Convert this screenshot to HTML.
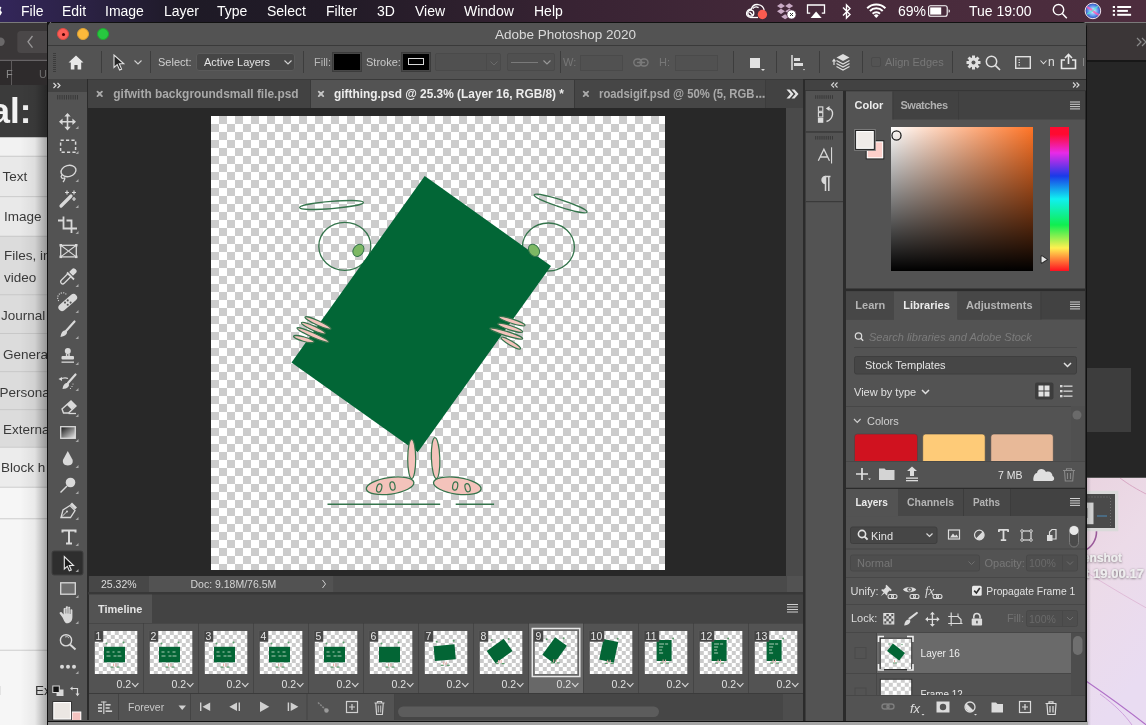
<!DOCTYPE html>
<html><head><meta charset="utf-8">
<style>
*{box-sizing:border-box;margin:0;padding:0}
html,body{width:1146px;height:725px;overflow:hidden;background:#e9dbe6;font-family:"Liberation Sans",sans-serif}
.a{position:absolute}
#ps,#menubar,#lb{will-change:transform}
#menubar{left:0;top:0;width:1146px;height:22px;background:linear-gradient(90deg,#33265a 0%,#2a2142 8%,#1e1a26 16%,#221b27 30%,#382333 50%,#472a3b 72%,#4d2d3e 100%);color:#fff;font-size:14px}
#menubar span{position:absolute;top:3px;white-space:nowrap}
#ps{left:48px;top:22px;width:1039px;height:700px;background:#535353;border-radius:5px 5px 0 0;overflow:hidden}
.t{color:#d6d6d6;font-size:11px;white-space:nowrap;position:absolute}
</style></head>
<body>
<!-- desktop wallpaper right -->
<svg class="a" style="left:1080px;top:470px" width="66" height="255" viewBox="1080 470 66 255" font-family="Liberation Sans">
<defs><linearGradient id="wp" x1="0" y1="0" x2="0.3" y2="1"><stop offset="0" stop-color="#e9d3df"/><stop offset="0.45" stop-color="#ecdbe8"/><stop offset="1" stop-color="#e9dcf2"/></linearGradient>
<linearGradient id="wsh" x1="0" y1="0" x2="1" y2="0"><stop offset="0" stop-color="#000" stop-opacity="0.2"/><stop offset="1" stop-color="#000" stop-opacity="0"/></linearGradient>
<filter id="tsh" x="-20%" y="-50%" width="140%" height="200%"><feDropShadow dx="0" dy="0.6" stdDeviation="0.9" flood-color="#000" flood-opacity="0.55"/></filter></defs>
<rect x="1080" y="470" width="66" height="255" fill="url(#wp)"/>
<path d="M1120 478C1128 484 1136 489 1150 496" fill="none" stroke="#d8a8c4" stroke-width="1"/>
<path d="M1096.5 531A21 21 0 0 1 1084 551" fill="none" stroke="#9a5a9a" stroke-width="1.6"/>
<path d="M1086 572C1105 584 1125 596 1150 610" fill="none" stroke="#e0bcd8" stroke-width="1"/>
<path d="M1086 681C1105 694 1125 708 1150 728" fill="none" stroke="#b070c8" stroke-width="1.1"/>
<path d="M1100 694C1115 705 1125 715 1132 725" fill="none" stroke="#c890d8" stroke-width="0.8"/>
<rect x="1080" y="490.8" width="38.3" height="40.5" fill="#dadada"/>
<rect x="1080" y="494" width="35" height="34" fill="#4a4a4a"/>
<rect x="1080" y="502.6" width="13.5" height="21.6" fill="#d0d0d0"/>
<rect x="1086" y="508" width="1.3" height="10" fill="#222"/>
<path d="M1097 516H1107" stroke="#4a8ab8" stroke-width="1"/>
<path d="M1110.5 498V526" stroke="#777" stroke-width="0.8" stroke-dasharray="1 2"/>
<path d="M1088 497H1110" stroke="#666" stroke-width="0.8" stroke-dasharray="2 1"/>
<g font-size="12.5" font-weight="bold" fill="#eeeeee" filter="url(#tsh)">
<text x="1083" y="562" textLength="39" lengthAdjust="spacingAndGlyphs">enshot</text>
<text x="1085" y="578" textLength="59" lengthAdjust="spacingAndGlyphs">t 19.00.17</text>
</g>
<rect x="1086" y="478" width="5" height="247" fill="url(#wsh)"/>
</svg>
<!-- right dark window -->
<div class="a" style="left:1080px;top:22px;width:66px;height:456px;background:#262626;border-bottom:1px solid #555"></div>
<div class="a" style="left:1080px;top:22px;width:66px;height:40px;background:linear-gradient(90deg,#2e2a2b,#3b3637 15%,#3b3637);border-top:1.5px solid #7a7a7a;border-bottom:2px solid #171717"></div>
<svg class="a" style="left:1136px;top:37px" width="12" height="10" viewBox="0 0 12 10"><path d="M1 1L5 5L1 9M6 1L10 5L6 9" fill="none" stroke="#8a8a8a" stroke-width="1.2"/></svg>
<div class="a" style="left:1080px;top:368px;width:51px;height:64px;background:#3d3d3d"></div>
<!-- left browser window -->
<div class="a" id="lb" style="left:0;top:22px;width:50px;height:703px;background:#f2f2f2;overflow:hidden">
<svg class="a" style="left:0;top:0" width="50" height="703" viewBox="0 22 50 703" font-family="Liberation Sans">
<rect x="0" y="22" width="50" height="703" fill="#f4f4f4"/>
<rect x="0" y="22" width="50" height="38" fill="#3a3738"/>
<rect x="0" y="22" width="50" height="1" fill="#7a7a7a"/>
<circle cx="0.5" cy="41.7" r="4.2" fill="#6a6869"/>
<rect x="17.3" y="30.9" width="40" height="22" rx="3.5" fill="#4a4748"/>
<path d="M32.5 36L28 41.8L32.5 47.6" fill="none" stroke="#9a9899" stroke-width="1.3"/>
<rect x="0" y="59.5" width="50" height="1" fill="#4e4b4c"/>
<rect x="0" y="60.5" width="50" height="24.5" fill="#2e2b2c"/>
<rect x="11" y="60.5" width="1" height="24.5" fill="#5e5b5c"/>
<text x="6" y="78" font-size="11" fill="#8a8a8a">F</text>
<text x="39" y="78" font-size="11" fill="#6e6e6e">U</text>
<rect x="0" y="85" width="50" height="52.5" fill="#3b3b3b"/>
<text x="-9.5" y="122.8" font-size="35" font-weight="bold" fill="#f2f2f2">al:</text>
<rect x="0" y="137.5" width="50" height="18.5" fill="#f2f2f2"/>
<rect x="0" y="156" width="50" height="40.5" fill="#e9e9e9"/>
<rect x="0" y="196.5" width="50" height="39.5" fill="#e9e9e9"/>
<rect x="0" y="236" width="50" height="211" fill="#dcdcdc"/>
<rect x="0" y="447" width="50" height="40" fill="#ececec"/>
<rect x="0" y="487" width="50" height="238" fill="#f6f6f6"/>
<g fill="#c4c4c4"><rect x="0" y="155.8" width="50" height="0.8"/><rect x="0" y="196.3" width="50" height="0.8"/><rect x="0" y="235.8" width="50" height="0.8"/><rect x="0" y="294.4" width="50" height="0.8"/><rect x="0" y="333.2" width="50" height="0.8"/><rect x="0" y="371.3" width="50" height="0.8"/><rect x="0" y="409.3" width="50" height="0.8"/><rect x="0" y="446.8" width="50" height="0.8"/><rect x="0" y="486.8" width="50" height="0.8"/><rect x="0" y="518.4" width="50" height="0.8"/><rect x="0" y="649.8" width="50" height="0.8"/></g>
<g font-size="13.5" fill="#3a3a3a">
<text x="2.5" y="180.5">Text</text>
<text x="4" y="220.7">Image</text>
<text x="4" y="260">Files, in</text>
<text x="4" y="281.5">video</text>
<text x="1" y="320">Journal</text>
<text x="3" y="358.5">General</text>
<text x="-0.5" y="396.5">Personal</text>
<text x="3" y="434">External</text>
<text x="1" y="471.5">Block h</text>
<text x="-2" y="695">l</text>
<text x="35" y="695">Ex</text>
</g>
<defs><linearGradient id="lsh" x1="0" y1="0" x2="1" y2="0"><stop offset="0" stop-color="#000" stop-opacity="0"/><stop offset="0.55" stop-color="#000" stop-opacity="0.05"/><stop offset="1" stop-color="#000" stop-opacity="0.32"/></linearGradient></defs>
<rect x="20" y="85" width="27" height="640" fill="url(#lsh)"/>
<rect x="47" y="22" width="3" height="703" fill="#111"/>
</svg>
</div>
<!-- menubar -->
<div class="a" id="menubar">

<svg class="a" style="left:-9px;top:4px" width="12" height="14" viewBox="0 0 12 14"><path d="M6 3.5C7 2 9.5 2.2 10.5 3.8C9 4.8 9.2 7.3 11 8C10.4 9.8 9.2 12 8 12C7 12 6.8 11.4 5.8 11.4C4.8 11.4 4.4 12 3.5 12C2 12 0 9 0 6.5C0 3.5 2.5 2.5 3.8 3C4.8 3.3 5.2 3.5 6 3.5Z" fill="#fff"/></svg>
<span style="left:21px">File</span>
<span style="left:62px">Edit</span>
<span style="left:105px">Image</span>
<span style="left:164px">Layer</span>
<span style="left:217px">Type</span>
<span style="left:267px">Select</span>
<span style="left:326px">Filter</span>
<span style="left:377px">3D</span>
<span style="left:415px">View</span>
<span style="left:464px">Window</span>
<span style="left:534px">Help</span>
<!-- CC icon -->
<svg class="a" style="left:744px;top:1px" width="26" height="20" viewBox="744 1 26 20"><g fill="none" stroke="#fff" stroke-width="1.3"><path d="M751 17.5C747.5 17.5 746.3 15 746.6 12.8C747 10.2 749.2 9 751.2 9.3C752.2 6 755 4.2 758.2 4.6C761.5 5 763.8 7.6 764.2 10.5"/><path d="M751 17.5H758"/><circle cx="750.8" cy="13.2" r="3"/><path d="M752.8 8.6C754.2 7 756.6 6.5 758.6 7.6"/></g><path d="M749.5 12L752.8 15.2" stroke="#fff" stroke-width="1.3"/><circle cx="762.4" cy="14.5" r="4.7" fill="#fb5b50"/></svg>
<!-- dropbox -->
<svg class="a" style="left:776px;top:2px" width="22" height="18" viewBox="776 2 22 18"><g fill="#c9aac5"><path d="M781 3.3L785 5.9L781 8.5L777 5.9Z M789.2 3.3L793.2 5.9L789.2 8.5L785.2 5.9Z M781 8.7L785 11.3L781 13.9L777 11.3Z M789.2 8.7L793.2 11.3L789.2 13.9L785.2 11.3Z M785.1 14.2L789 16.7L785.1 19.2L781.2 16.7Z"/></g><circle cx="791.5" cy="14.5" r="4.6" fill="#fff" stroke="#4a2a40" stroke-width="0.8"/><path d="M790 13L793 16M793 13L790 16" stroke="#333" stroke-width="1"/></svg>
<!-- airplay -->
<svg class="a" style="left:805px;top:3px" width="22" height="17" viewBox="805 3 22 17"><path d="M810.2 13.2H807.5V5H824.5V13.2H821.8" fill="none" stroke="#fff" stroke-width="1.3"/><path d="M810.6 18L816.1 11.4L821.6 18Z" fill="#fff"/></svg>
<!-- bluetooth -->
<svg class="a" style="left:841px;top:3px" width="12" height="17" viewBox="0 0 12 17"><path d="M2 4.5L9 11.5L5.5 15V2L9 5.5L2 12.5" fill="none" stroke="#fff" stroke-width="1.4"/></svg>
<!-- wifi -->
<svg class="a" style="left:864px;top:2px" width="25" height="18" viewBox="864 2 25 18"><g fill="none" stroke="#fff" stroke-width="2"><path d="M867.2 8.2A13 13 0 0 1 885.4 8.2"/><path d="M869.9 11A9 9 0 0 1 882.7 11"/><path d="M872.6 13.8A5.2 5.2 0 0 1 880 13.8"/></g><path d="M876.3 18L873.9 15.5A3.4 3.4 0 0 1 878.7 15.5Z" fill="#fff"/></svg>
<span style="left:898px;font-size:14px">69%</span>
<!-- battery -->
<svg class="a" style="left:926px;top:3px" width="28" height="16" viewBox="926 3 28 16"><rect x="928.6" y="5.8" width="18.6" height="10.4" rx="2" fill="none" stroke="#fff" stroke-width="1.1"/><rect x="930.2" y="7.4" width="11" height="7.2" fill="#fff"/><path d="M948.6 9.2A1.9 1.9 0 0 1 948.6 12.8Z" fill="#fff"/></svg>
<span style="left:969px">Tue 19:00</span>
<!-- search -->
<svg class="a" style="left:1050px;top:2px" width="20" height="19" viewBox="1050 2 20 19"><circle cx="1058.5" cy="9.7" r="5.2" fill="none" stroke="#fff" stroke-width="1.4"/><path d="M1062.3 13.5L1066.8 18.3" stroke="#fff" stroke-width="1.5"/></svg>
<!-- siri -->
<svg class="a" style="left:1084px;top:2px" width="18" height="18" viewBox="1084 2 18 18"><defs><radialGradient id="sg" cx="50%" cy="50%" r="55%"><stop offset="0" stop-color="#ffffff"/><stop offset="0.3" stop-color="#9ad0ff"/><stop offset="0.7" stop-color="#4a7ae0"/><stop offset="1" stop-color="#2a2a80"/></radialGradient></defs><circle cx="1092.9" cy="10.9" r="7.8" fill="url(#sg)"/><path d="M1087 7Q1091 9 1093 11T1099 15" stroke="#ff5ab0" stroke-width="2" fill="none" opacity="0.8"/><path d="M1087 14Q1092 12 1098 6" stroke="#50f0d0" stroke-width="1.5" fill="none" opacity="0.7"/><circle cx="1092.9" cy="10.9" r="7.8" fill="none" stroke="#f4e8f0" stroke-width="1"/></svg>
<!-- list -->
<svg class="a" style="left:1110px;top:4px" width="24" height="14" viewBox="1110 4 24 14"><g fill="#fff"><rect x="1112.8" y="6" width="2.2" height="2"/><rect x="1117.2" y="6" width="13.9" height="2"/><rect x="1112.8" y="9.9" width="2.2" height="2"/><rect x="1117.2" y="9.9" width="10.7" height="2"/><rect x="1112.8" y="13.8" width="2.2" height="2"/><rect x="1117.2" y="13.8" width="13.9" height="2"/></g></svg>
</div>
<div class="a" style="left:48px;top:721px;width:1040px;height:4px;background:linear-gradient(90deg,#8a8a8a,#a4a4a4 50%,#a8a8a8)"></div>
<!-- photoshop window -->
<div class="a" id="ps">

<!-- title bar -->
<div class="a" style="left:0;top:0;width:1038px;height:24px;background:#535353;border-top:1px solid #111;border-bottom:1px solid #3a3a3a"></div>
<div class="a" style="left:9px;top:6px;width:12px;height:12px;border-radius:50%;background:#fd5e57;border:0.5px solid #de4a43"></div>
<div class="a" style="left:13.5px;top:10.5px;width:3px;height:3px;border-radius:50%;background:#4d0000"></div>
<div class="a" style="left:29px;top:6px;width:12px;height:12px;border-radius:50%;background:#fcb93b;border:0.5px solid #dea236"></div>
<div class="a" style="left:49px;top:6px;width:12px;height:12px;border-radius:50%;background:#27c83f;border:0.5px solid #1fa631"></div>
<div class="t" style="left:447px;top:5px;font-size:13.5px;color:#dadada">Adobe Photoshop 2020</div>
<!-- options bar -->
<div class="a" style="left:0;top:24px;width:1038px;height:34px;background:#535353;border-bottom:1px solid #3a3a3a"></div>
<div class="a" id="opts" style="left:0;top:23px;width:1038px;height:34px">
<div class="a" style="left:5px;top:8px;width:3px;height:19px;background:repeating-linear-gradient(#3c3c3c 0 1px,transparent 1px 2px)"></div>
<svg class="a" style="left:20px;top:10px" width="16" height="15" viewBox="0 0 16 15"><path d="M8 0.5L15.5 7.5H13.2V14.5H9.6V10H6.4V14.5H2.8V7.5H0.5Z" fill="#e8e8e8"/></svg>
<div class="a" style="left:53px;top:6px;width:1px;height:22px;background:#3d3d3d"></div>
<svg class="a" style="left:65px;top:9px" width="13" height="17" viewBox="0 0 13 17"><path d="M1 1V13.5L4.2 10.6L6.6 16L8.6 15.1L6.3 9.8H10.8Z" fill="#232323" stroke="#e0e0e0" stroke-width="1.1"/></svg>
<svg class="a" style="left:86px;top:15px" width="8" height="5" viewBox="0 0 8 5"><path d="M0.5 0.5L4 4L7.5 0.5" fill="none" stroke="#cfcfcf" stroke-width="1.1"/></svg>
<div class="a" style="left:102px;top:6px;width:1px;height:22px;background:#3d3d3d"></div>
<div class="t" style="left:110px;top:11px;color:#d0d0d0">Select:</div>
<div class="a" style="left:148px;top:8px;width:99px;height:18px;background:#464646;border:1px solid #5a5a5a;border-radius:3px"></div>
<div class="t" style="left:156px;top:11px;color:#e4e4e4">Active Layers</div>
<svg class="a" style="left:236px;top:15px" width="8" height="5" viewBox="0 0 8 5"><path d="M0.5 0.5L4 4L7.5 0.5" fill="none" stroke="#d0d0d0" stroke-width="1.1"/></svg>
<div class="a" style="left:255px;top:6px;width:1px;height:22px;background:#3d3d3d"></div>
<div class="t" style="left:266px;top:11px;color:#b8b8b8">Fill:</div>
<div class="a" style="left:284px;top:7px;width:30px;height:20px;background:#474747;border:1px solid #3c3c3c"></div>
<div class="a" style="left:286px;top:9px;width:26px;height:16px;background:#000"></div>
<div class="t" style="left:318px;top:11px;color:#c8c8c8">Stroke:</div>
<div class="a" style="left:353px;top:7px;width:30px;height:20px;background:#474747;border:1px solid #3c3c3c"></div>
<div class="a" style="left:355px;top:9px;width:26px;height:16px;background:#000"></div>
<div class="a" style="left:360px;top:13px;width:16px;height:7px;border:1.5px solid #d8d8d8"></div>
<div class="a" style="left:387px;top:8px;width:66px;height:18px;border:1px solid #4a4a4a;border-radius:2px;background:#505050"></div>
<div class="a" style="left:438px;top:8px;width:1px;height:18px;background:#4a4a4a"></div>
<svg class="a" style="left:442px;top:16px" width="8" height="5" viewBox="0 0 8 5"><path d="M0.5 0.5L4 4L7.5 0.5" fill="none" stroke="#6a6a6a" stroke-width="1"/></svg>
<div class="a" style="left:459px;top:8px;width:48px;height:18px;border:1px solid #4a4a4a;border-radius:2px;background:#505050"></div>
<div class="a" style="left:463px;top:16.5px;width:27px;height:1px;background:#7a7a7a"></div>
<svg class="a" style="left:495px;top:15px" width="8" height="5" viewBox="0 0 8 5"><path d="M0.5 0.5L4 4L7.5 0.5" fill="none" stroke="#9a9a9a" stroke-width="1.1"/></svg>
<div class="a" style="left:512px;top:6px;width:1px;height:22px;background:#3d3d3d"></div>
<div class="t" style="left:515px;top:11px;color:#777">W:</div>
<div class="a" style="left:532px;top:10px;width:43px;height:16px;border:1px solid #4a4a4a;background:#515151"></div>
<svg class="a" style="left:585px;top:13px" width="16" height="9" viewBox="0 0 16 9"><rect x="0.8" y="1" width="8" height="7" rx="3.5" fill="none" stroke="#7a7a7a" stroke-width="1.4"/><rect x="7" y="1" width="8" height="7" rx="3.5" fill="none" stroke="#7a7a7a" stroke-width="1.4"/><path d="M4 4.5H12" stroke="#7a7a7a" stroke-width="1.4"/></svg>
<div class="t" style="left:611px;top:11px;color:#777">H:</div>
<div class="a" style="left:627px;top:10px;width:43px;height:16px;border:1px solid #4a4a4a;background:#515151"></div>
<div class="a" style="left:685px;top:6px;width:1px;height:22px;background:#3d3d3d"></div>
<div class="a" style="left:702px;top:13px;width:10px;height:10px;background:#e2e2e2"></div>
<div class="a" style="left:713px;top:24px;width:0;height:0;border-left:2px solid transparent;border-right:2px solid transparent;border-top:2px solid #ddd"></div>
<div class="a" style="left:728px;top:6px;width:1px;height:22px;background:#3d3d3d"></div>
<svg class="a" style="left:743px;top:10px" width="16" height="16" viewBox="0 0 16 16"><path d="M1 0V15" stroke="#ddd" stroke-width="1.5"/><rect x="3" y="3" width="6" height="3" fill="#ddd"/><rect x="3" y="8" width="9" height="3" fill="#ddd"/><path d="M12 14L14 14L13 15.5Z" fill="#ddd"/></svg>
<div class="a" style="left:771px;top:6px;width:1px;height:22px;background:#3d3d3d"></div>
<svg class="a" style="left:784px;top:8px" width="19" height="19" viewBox="0 0 19 19"><path d="M2 12V7M0.5 8.5L2 6.5L3.5 8.5" fill="none" stroke="#ddd" stroke-width="1.2"/><path d="M11 1L17.5 4.5L11 8L4.5 4.5Z" fill="#ddd"/><path d="M4.5 7.5L11 11L17.5 7.5M4.5 10.5L11 14L17.5 10.5M4.5 13.5L11 17L17.5 13.5" fill="none" stroke="#ddd" stroke-width="1.2"/></svg>
<div class="a" style="left:814px;top:6px;width:1px;height:22px;background:#3d3d3d"></div>
<div class="a" style="left:823px;top:12px;width:10px;height:10px;border:1px solid #4a4a4a;border-radius:2px"></div>
<div class="t" style="left:837px;top:11px;color:#777">Align Edges</div>
<div class="a" style="left:904px;top:6px;width:1px;height:22px;background:#3d3d3d"></div>
<svg class="a" style="left:918px;top:10px" width="15" height="15" viewBox="0 0 15 15"><g transform="translate(7.5 7.5)"><circle r="5" fill="#e0e0e0"/><g fill="#e0e0e0"><rect x="-1.5" y="-7" width="3" height="14"/><rect x="-7" y="-1.5" width="14" height="3"/><rect x="-1.5" y="-7" width="3" height="14" transform="rotate(45)"/><rect x="-1.5" y="-7" width="3" height="14" transform="rotate(-45)"/></g><circle r="2" fill="#535353"/></g></svg>
<svg class="a" style="left:937px;top:10px" width="16" height="16" viewBox="0 0 16 16"><circle cx="6.5" cy="6.5" r="5.2" fill="none" stroke="#e0e0e0" stroke-width="1.5"/><path d="M10.3 10.3L15 15" stroke="#e0e0e0" stroke-width="1.7"/></svg>
<svg class="a" style="left:967px;top:11px" width="16" height="13" viewBox="0 0 16 13"><rect x="0.7" y="0.7" width="14.6" height="11.6" fill="none" stroke="#e0e0e0" stroke-width="1.4"/><path d="M3.5 4H5M3.5 6.5H5M3.5 9H5" stroke="#e0e0e0" stroke-width="1.2"/></svg>
<svg class="a" style="left:992px;top:15px" width="7" height="5" viewBox="0 0 7 5"><path d="M0.5 0.5L3.5 3.8L6.5 0.5" fill="none" stroke="#ddd" stroke-width="1.1"/></svg>
<div class="t" style="left:1000px;top:10px;color:#e0e0e0;font-size:12px">n</div>
<svg class="a" style="left:1012px;top:8px" width="17" height="17" viewBox="0 0 17 17"><path d="M5 7H1.5V15.5H15.5V7H12" fill="none" stroke="#e8e8e8" stroke-width="1.6"/><path d="M8.5 11V1.5M5 5L8.5 1.5L12 5" fill="none" stroke="#e8e8e8" stroke-width="1.6"/></svg>
<div class="a" style="left:1035px;top:13px;width:1px;height:8px;background:#888"></div>
</div>
<!-- header row under options -->
<div class="a" style="left:0;top:57px;width:39px;height:13px;background:#424242"></div>
<div class="a" style="left:757px;top:57px;width:281px;height:12px;background:#424242"></div>
<!-- toolbar -->
<div class="a" id="tools" style="left:0;top:70px;width:39px;height:628px;background:#535353"></div>
<svg class="a" style="left:0;top:57px" width="40" height="641" viewBox="48 79 40 641">
<rect x="48" y="79" width="39" height="13" fill="#424242"/>
<path d="M53.5 83L56 85.5L53.5 88M57.5 83L60 85.5L57.5 88" fill="none" stroke="#d8d8d8" stroke-width="1.2"/>
<g stroke="#393939" stroke-width="1"><path d="M57.7 95V99.5"/><path d="M59.9 95V99.5"/><path d="M62.1 95V99.5"/><path d="M64.3 95V99.5"/><path d="M66.5 95V99.5"/><path d="M68.7 95V99.5"/><path d="M70.9 95V99.5"/><path d="M73.1 95V99.5"/><path d="M75.3 95V99.5"/><path d="M77.5 95V99.5"/></g>
<g stroke="#d9d9d9" stroke-width="1.6" fill="none"><path d="M67.5 114.5V129M60 121.7H75"/></g><g fill="#d9d9d9"><path d="M67.5 113L64.3 116.6H70.7Z M67.5 130.4L64.3 126.8H70.7Z M59 121.7L62.6 118.5V124.9Z M76 121.7L72.4 118.5V124.9Z"/></g><path d="M78.5 129.0L78.5 126.0L75.5 129.0Z" fill="#a8a8a8"/>
<rect x="60.6" y="140.3" width="15" height="12" fill="none" stroke="#d9d9d9" stroke-width="1.5" stroke-dasharray="3.2 2.2"/><path d="M78.5 154.0L78.5 151.0L75.5 154.0Z" fill="#a8a8a8"/>
<ellipse cx="68.5" cy="171" rx="7.6" ry="5.5" fill="none" stroke="#d9d9d9" stroke-width="1.4" transform="rotate(-15 68.5 171)"/><path d="M62 175C60 177 62 179 64 178C66 177 64 181 63 182" fill="none" stroke="#d9d9d9" stroke-width="1.3"/><path d="M78.5 182.0L78.5 179.0L75.5 182.0Z" fill="#a8a8a8"/>
<path d="M61 206L71 196" stroke="#d9d9d9" stroke-width="3.2" stroke-linecap="round"/><g stroke="#d9d9d9" stroke-width="1.2"><path d="M67 190.5V194.5M65 192.5H69M74 190.5V194.5M72 192.5H76M74 197V201M72 199H76"/></g><path d="M78.5 208.0L78.5 205.0L75.5 208.0Z" fill="#a8a8a8"/>
<path d="M58 220.5H63.5M63.5 216.5V228.5H75.5M66.5 220.5H71.5V231M71.5 231V233M74 228.5H77" fill="none" stroke="#d9d9d9" stroke-width="1.8"/><path d="M78.5 234.0L78.5 231.0L75.5 234.0Z" fill="#a8a8a8"/>
<rect x="60.7" y="245.3" width="15.6" height="11.6" fill="none" stroke="#d9d9d9" stroke-width="1.3"/><path d="M60.7 245.3L76.3 256.9M76.3 245.3L60.7 256.9" stroke="#d9d9d9" stroke-width="1.1"/><g fill="#d9d9d9"><rect x="59.5" y="244" width="2.5" height="2.5"/><rect x="75" y="244" width="2.5" height="2.5"/><rect x="59.5" y="255.6" width="2.5" height="2.5"/><rect x="75" y="255.6" width="2.5" height="2.5"/></g>
<path d="M61.5 283.5C60 282 60.5 281 61.5 280L68 273.5L71 276.5L64.5 283C63.5 284 62.5 284.5 61.5 283.5Z" fill="none" stroke="#d9d9d9" stroke-width="1.3"/><path d="M67 272.5L74 279.5M70.5 272L73 269.5C74 268.5 76.5 271 75.5 272L73 274.5Z" fill="#d9d9d9" stroke="#d9d9d9" stroke-width="1.8"/><path d="M78.5 287.0L78.5 284.0L75.5 287.0Z" fill="#a8a8a8"/>
<path d="M62 307.5L73.5 297.5" stroke="#d9d9d9" stroke-width="7.2" stroke-linecap="round"/><g fill="#535353"><circle cx="67.7" cy="300.4" r="1.05"/><circle cx="70.6" cy="302.6" r="1.05"/><circle cx="65" cy="302.6" r="1.05"/><circle cx="67.7" cy="304.8" r="1.05"/></g><path d="M58.8 301A4.8 4.8 0 0 1 66.5 294.6" fill="none" stroke="#d9d9d9" stroke-width="1.1" stroke-dasharray="1.1 1.2"/><path d="M78.5 313.0L78.5 310.0L75.5 313.0Z" fill="#a8a8a8"/>
<path d="M66 331L74.5 321.5" stroke="#d9d9d9" stroke-width="2.2" stroke-linecap="round"/><path d="M60.5 337C61 333 62.5 330.5 65 330.5C67 330.5 67.5 332.5 66.5 334C65 336 63 336.5 60.5 337Z" fill="#d9d9d9"/><path d="M78.5 339.0L78.5 336.0L75.5 339.0Z" fill="#a8a8a8"/>
<circle cx="67.8" cy="351" r="3" fill="#d9d9d9"/><path d="M66.6 353.5V356.5M69 353.5V356.5" stroke="#d9d9d9" stroke-width="1.5"/><rect x="61.5" y="356" width="12.5" height="3.5" rx="1" fill="#d9d9d9"/><rect x="61.5" y="361.5" width="12.5" height="1.3" fill="#d9d9d9"/><path d="M78.5 365.0L78.5 362.0L75.5 365.0Z" fill="#a8a8a8"/>
<path d="M68 383L75.5 374.5" stroke="#d9d9d9" stroke-width="2.2" stroke-linecap="round"/><path d="M62.5 389C63 385.5 64.5 383 67 383C69 383 69.5 385 68.5 386.5C67 388.5 65 388.8 62.5 389Z" fill="#d9d9d9"/><path d="M68 378.5C65.5 377.5 62.5 378 60 379.5" fill="none" stroke="#d9d9d9" stroke-width="1.3"/><path d="M58.5 379L62 377V381Z" fill="#d9d9d9"/><g fill="#d9d9d9"><circle cx="73" cy="384" r="0.6"/><circle cx="72" cy="386.5" r="0.6"/><circle cx="70.5" cy="388.5" r="0.6"/></g><path d="M78.5 391.0L78.5 388.0L75.5 391.0Z" fill="#a8a8a8"/>
<path d="M62 409L71 401L76 406L68.5 413H63.5Z" fill="none" stroke="#d9d9d9" stroke-width="1.4"/><path d="M66.5 404.5L71.5 409.5L76 405.8L71 401Z" fill="#d9d9d9"/><path d="M68.5 413.5H76" stroke="#d9d9d9" stroke-width="1.3"/><path d="M78.5 417.0L78.5 414.0L75.5 417.0Z" fill="#a8a8a8"/>
<defs><linearGradient id="gr" x1="0" y1="0" x2="1" y2="1"><stop offset="0" stop-color="#111"/><stop offset="1" stop-color="#eee"/></linearGradient></defs><rect x="60.7" y="426.7" width="14.6" height="11.6" fill="url(#gr)" stroke="#d9d9d9" stroke-width="1.3"/><path d="M78.5 442.0L78.5 439.0L75.5 442.0Z" fill="#a8a8a8"/>
<path d="M67.8 451L63.2 459.5C62 462.5 64 465.5 67.8 465.5C71.6 465.5 73.6 462.5 72.4 459.5Z" fill="#d9d9d9"/><path d="M78.5 468.0L78.5 465.0L75.5 468.0Z" fill="#a8a8a8"/>
<circle cx="70.5" cy="482.5" r="4.8" fill="#d9d9d9"/><path d="M60.5 492.5L67 486" stroke="#d9d9d9" stroke-width="1.5"/><path d="M78.5 494.0L78.5 491.0L75.5 494.0Z" fill="#a8a8a8"/>
<path d="M61 517.5L63 510L70 505.5L75 510.5L70.5 517.5Z" fill="none" stroke="#d9d9d9" stroke-width="1.3"/><path d="M70 504.5L72 502.5L77 507.5L75 509.5Z" fill="#d9d9d9"/><path d="M61 517.5L66.5 512" stroke="#d9d9d9" stroke-width="1"/><circle cx="67" cy="511.5" r="1" fill="#d9d9d9"/><path d="M78.5 520.0L78.5 517.0L75.5 520.0Z" fill="#a8a8a8"/>
<path d="M62.5 532.5V530.5H75.5V532.5M69 530.5V543.5M66 543.5H72" fill="none" stroke="#d9d9d9" stroke-width="2"/><path d="M78.5 546.0L78.5 543.0L75.5 546.0Z" fill="#a8a8a8"/>
<rect x="52" y="551" width="31" height="24" rx="2" fill="#2e2e2e" stroke="#3e3e3e" stroke-width="1"/><path d="M64.3 556.5V569L67.3 566.3L69.3 570.8L71.3 569.9L69.3 565.5H73.5Z" fill="#1a1a1a" stroke="#e8e8e8" stroke-width="1.1"/><path d="M78.5 572.0L78.5 569.0L75.5 572.0Z" fill="#a8a8a8"/>
<rect x="60.7" y="582.8" width="14.6" height="11.4" fill="#6e6e6e" stroke="#d9d9d9" stroke-width="1.3"/><path d="M78.5 598.0L78.5 595.0L75.5 598.0Z" fill="#a8a8a8"/>
<g fill="#d9d9d9"><path d="M62.5 617.5L59.8 613.8C59 612.6 60.6 611.3 61.6 612.3L63.6 614.5V609C63.6 607.6 65.8 607.6 65.8 609V614V607.2C65.8 605.8 68 605.8 68 607.2V614V607.8C68 606.4 70.2 606.4 70.2 607.8V614.5V610.2C70.2 608.8 72.4 608.8 72.4 610.2V617C72.4 620.8 70.4 623.3 67 623.3C64.8 623.3 63.6 619.6 62.5 617.5Z"/></g><g stroke="#535353" stroke-width="0.6"><path d="M65.8 609V613.5M68 607.5V613.5M70.2 608V614"/></g><path d="M78.5 624.0L78.5 621.0L75.5 624.0Z" fill="#a8a8a8"/>
<circle cx="66" cy="640.3" r="5.6" fill="none" stroke="#d9d9d9" stroke-width="1.4"/><path d="M70 644.5L75.5 649.5" stroke="#d9d9d9" stroke-width="2"/><path d="M65 637A3 3 0 0 1 69 638" fill="none" stroke="#d9d9d9" stroke-width="0.8"/>
<g fill="#d9d9d9"><circle cx="62" cy="666.8" r="2"/><circle cx="68" cy="666.8" r="2"/><circle cx="74" cy="666.8" r="2"/></g><path d="M78.5 674.0L78.5 671.0L75.5 674.0Z" fill="#a8a8a8"/>
<rect x="56.5" y="689.5" width="7" height="6.5" fill="#d8d8d8"/><rect x="52.8" y="686" width="6.5" height="6.5" fill="#111" stroke="#d8d8d8" stroke-width="1"/>
<path d="M72 688.5H77.5V694" fill="none" stroke="#d9d9d9" stroke-width="1.2"/><path d="M70 688.5L72.5 686.5V690.5Z M77.5 696.2L75.5 693.5H79.5Z" fill="#d9d9d9"/>
<rect x="71.5" y="711.5" width="9.8" height="9" fill="#fff"/><rect x="72.5" y="712.5" width="7.8" height="7.5" fill="#f4c3c0"/>
<rect x="52.5" y="701.3" width="19.2" height="19" fill="#2a2a2a"/><rect x="53.2" y="702" width="17.8" height="17.6" fill="#fff"/><rect x="54.3" y="703.1" width="15.6" height="15.4" fill="#ebe7e3"/>
</svg>

<!-- gap dark -->
<div class="a" style="left:39px;top:57px;width:1px;height:641px;background:#2b2b2b"></div>
<!-- doc tab bar -->
<div class="a" id="tabs" style="left:40px;top:58px;width:715px;height:28px;background:#424242"></div>

<div class="a" style="left:40px;top:58px;width:222px;height:28px;background:#424242"></div>
<div class="a" style="left:262px;top:58px;width:264px;height:28px;background:#535353"></div>
<div class="a" style="left:527px;top:58px;width:190px;height:28px;background:#464646"></div><div class="a" style="left:261.5px;top:58px;width:1px;height:28px;background:#393939"></div><div class="a" style="left:526px;top:58px;width:1px;height:28px;background:#393939"></div><div class="a" style="left:716.5px;top:58px;width:1px;height:28px;background:#3c3c3c"></div>
<svg class="a" style="left:40px;top:58px" width="716" height="28" viewBox="88 80 716 28" font-family="Liberation Sans" font-weight="bold" font-size="12">
<path d="M97.5 91.7L101.9 96.1M101.9 91.7L97.5 96.1" stroke="#a9a9a9" stroke-width="1.9" stroke-linecap="round"/><circle cx="99.7" cy="93.9" r="1.3" fill="#a9a9a9"/>
<path d="M318.8 91.7L323.2 96.1M323.2 91.7L318.8 96.1" stroke="#c4c4c4" stroke-width="1.9" stroke-linecap="round"/><circle cx="321.0" cy="93.9" r="1.3" fill="#c4c4c4"/>
<path d="M583.7 91.7L588.1 96.1M588.1 91.7L583.7 96.1" stroke="#a9a9a9" stroke-width="1.9" stroke-linecap="round"/><circle cx="585.9" cy="93.9" r="1.3" fill="#a9a9a9"/>
<text x="113.3" y="97.8" fill="#a9a9a9" textLength="185.3" lengthAdjust="spacingAndGlyphs">gifwith backgroundsmall file.psd</text>
<text x="334" y="97.8" fill="#ededed" textLength="230" lengthAdjust="spacingAndGlyphs">gifthing.psd @ 25.3% (Layer 16, RGB/8) *</text>
<text x="599" y="97.8" fill="#a9a9a9" textLength="155.5" lengthAdjust="spacingAndGlyphs">roadsigif.psd @ 50% (5, RGB</text>
<g fill="#a9a9a9"><rect x="756" y="95.8" width="2" height="2"/><rect x="759.3" y="95.8" width="2" height="2"/><rect x="762.6" y="95.8" width="2" height="2"/></g>
</svg>
<svg class="a" style="left:738px;top:67px" width="13" height="10" viewBox="0 0 13 10"><path d="M0.5 0.5H3.5L7.5 5L3.5 9.5H0.5L4.5 5Z M5.5 0.5H8.5L12.5 5L8.5 9.5H5.5L9.5 5Z" fill="#e4e4e4"/></svg>
<!-- canvas area -->
<div class="a" style="left:40px;top:86px;width:698px;height:468px;background:#282828"></div>
<div class="a" style="left:738px;top:86px;width:17px;height:468px;background:#4a4a4a"></div>

<svg class="a" style="left:163px;top:94px" width="454" height="454" viewBox="211 116 454 454">
<defs><pattern id="chk" x="211" y="116" width="16" height="16" patternUnits="userSpaceOnUse"><rect width="16" height="16" fill="#fff"/><rect x="8" width="8" height="8" fill="#cccccc"/><rect y="8" width="8" height="8" fill="#cccccc"/></pattern></defs>
<rect x="211" y="116" width="454" height="454" fill="url(#chk)"/>
<ellipse cx="331.5" cy="205" rx="32" ry="3.6" transform="rotate(-4.5 331.5 205)" fill="none" stroke="#35744c" stroke-width="1.3"/>
<ellipse cx="560.6" cy="203.5" rx="27.8" ry="3.6" transform="rotate(18 560.6 203.5)" fill="none" stroke="#35744c" stroke-width="1.3"/>
<ellipse cx="344.8" cy="246.3" rx="26" ry="24" fill="none" stroke="#35744c" stroke-width="1.3"/>
<ellipse cx="548.4" cy="247" rx="26" ry="24" fill="none" stroke="#35744c" stroke-width="1.3"/>
<polygon points="424.7,176 551,266 417.8,452.3 291.5,362.5" fill="#026636"/>
<ellipse cx="358.4" cy="250.3" rx="5" ry="6.6" transform="rotate(35 358.4 250.3)" fill="#7db864" stroke="#35744c" stroke-width="1"/>
<ellipse cx="534" cy="250.3" rx="5" ry="6.6" transform="rotate(-35 534 250.3)" fill="#7db864" stroke="#35744c" stroke-width="1"/>
<ellipse cx="318.0" cy="323.0" rx="14.3" ry="2.2" transform="rotate(24.8 318.0 323.0)" fill="#f4c3bb" stroke="#35744c" stroke-width="1.2"/><ellipse cx="313.4" cy="328.1" rx="13.1" ry="2.2" transform="rotate(24.5 313.4 328.1)" fill="#f4c3bb" stroke="#35744c" stroke-width="1.2"/><ellipse cx="312.9" cy="335.0" rx="17.4" ry="2.2" transform="rotate(23.8 312.9 335.0)" fill="#f4c3bb" stroke="#35744c" stroke-width="1.2"/><ellipse cx="303.8" cy="339.1" rx="10.6" ry="2.2" transform="rotate(15.6 303.8 339.1)" fill="#f4c3bb" stroke="#35744c" stroke-width="1.2"/><ellipse cx="512.0" cy="321.2" rx="13.7" ry="2.2" transform="rotate(17.9 512.0 321.2)" fill="#f4c3bb" stroke="#35744c" stroke-width="1.2"/><ellipse cx="510.2" cy="327.8" rx="13.1" ry="2.2" transform="rotate(17.8 510.2 327.8)" fill="#f4c3bb" stroke="#35744c" stroke-width="1.2"/><ellipse cx="506.2" cy="333.5" rx="17.2" ry="2.2" transform="rotate(17.2 506.2 333.5)" fill="#f4c3bb" stroke="#35744c" stroke-width="1.2"/><ellipse cx="510.8" cy="343.1" rx="11.3" ry="2.2" transform="rotate(30.3 510.8 343.1)" fill="#f4c3bb" stroke="#35744c" stroke-width="1.2"/>
<ellipse cx="411.7" cy="459" rx="4" ry="19.5" fill="#f4c3bb" stroke="#35744c" stroke-width="1.2"/>
<ellipse cx="435.6" cy="458.1" rx="4.2" ry="20.5" transform="rotate(-2 435.6 458.1)" fill="#f4c3bb" stroke="#35744c" stroke-width="1.2"/>
<ellipse cx="390.1" cy="485.8" rx="24" ry="8.3" transform="rotate(-8 390.1 485.8)" fill="#f4c3bb" stroke="#35744c" stroke-width="1.3"/>
<ellipse cx="457.3" cy="485.8" rx="24" ry="8.3" transform="rotate(8 457.3 485.8)" fill="#f4c3bb" stroke="#35744c" stroke-width="1.3"/>
<ellipse cx="379.2" cy="488" rx="2.5" ry="4.2" transform="rotate(15 379.2 488)" fill="none" stroke="#35744c" stroke-width="1.2"/>
<ellipse cx="392.5" cy="486" rx="2.5" ry="4.2" transform="rotate(-10 392.5 486)" fill="none" stroke="#35744c" stroke-width="1.2"/>
<ellipse cx="455.2" cy="486" rx="2.5" ry="4.2" transform="rotate(10 455.2 486)" fill="none" stroke="#35744c" stroke-width="1.2"/>
<ellipse cx="467.6" cy="487.7" rx="2.5" ry="4.2" transform="rotate(-15 467.6 487.7)" fill="none" stroke="#35744c" stroke-width="1.2"/>
<path d="M327.5 504.2H440.2M455.7 504.2H494.1" stroke="#35744c" stroke-width="1.6"/>
</svg>
<!--TL-->
<svg class="a" style="left:40px;top:554px" width="716" height="144" viewBox="88 576 716 144" font-family="Liberation Sans">
<defs><pattern id="chk4" width="8" height="8" patternUnits="userSpaceOnUse"><rect width="8" height="8" fill="#fff"/><rect x="4" width="4" height="4" fill="#cbcbcb"/><rect y="4" width="4" height="4" fill="#cbcbcb"/></pattern></defs>
<rect x="88" y="576" width="716" height="144" fill="#434343"/>
<rect x="89" y="576" width="714" height="16" fill="#4a4a4a"/>
<rect x="89" y="576" width="60" height="16" fill="#474747"/>
<rect x="149" y="576" width="184.3" height="16" fill="#525252"/>
<rect x="787" y="576" width="16" height="16" fill="#525252"/>
<rect x="88" y="576" width="1" height="144" fill="#2b2b2b"/>
<text x="101" y="588" font-size="10.5" fill="#dcdcdc">25.32%</text>
<text x="190.5" y="588" font-size="10.5" fill="#d4d4d4">Doc: 9.18M/76.5M</text>
<path d="M322.5 580L325.5 584L322.5 588" fill="none" stroke="#cfcfcf" stroke-width="1"/>
<rect x="88" y="592" width="716" height="2.5" fill="#383838"/>
<rect x="89" y="594.5" width="63" height="28.5" fill="#535353"/>
<text x="98" y="612.5" font-size="11" font-weight="bold" fill="#e4e4e4">Timeline</text>
<g fill="#cfcfcf"><rect x="787" y="604" width="11" height="1"/><rect x="787" y="606.5" width="11" height="1"/><rect x="787" y="609" width="11" height="1"/><rect x="787" y="611.5" width="11" height="1"/></g>
<rect x="89" y="623" width="714" height="0.8" fill="#3b3b3b"/>
<rect x="89" y="623.5" width="54" height="69.5" fill="#535353"/>
<g transform="translate(94.8 631)"><rect width="42.5" height="43" fill="url(#chk4)"/>
<rect x="9.2" y="15.8" width="21" height="15.5" fill="#036535" transform="rotate(0 19.7 23.5)"/>
<g fill="#5a9a6a"><circle cx="11.7" cy="12.5" r="1"/><circle cx="28.7" cy="11.5" r="1"/><rect x="15.7" y="35.5" width="3" height="1.2"/><rect x="21.7" y="35.5" width="3" height="1.2"/></g><g fill="#e8b0a8"><rect x="18.2" y="32.5" width="1" height="3"/><rect x="20.7" y="32.5" width="1" height="3"/></g>
<g fill="#d8e8d8" opacity="0.8"><rect x="11.7" y="20.5" width="3" height="1"/><rect x="17.7" y="20.5" width="2" height="1"/><rect x="22.7" y="20.5" width="3" height="1"/><rect x="11.7" y="24.5" width="4" height="1"/><rect x="18.7" y="24.5" width="3" height="1"/><rect x="22.7" y="24.5" width="4" height="1"/></g>
</g>
<rect x="94.0" y="630.5" width="9" height="11" fill="#464646" stroke="#5a5a5a" stroke-width="0.6"/>
<text x="95.6" y="640.3" font-size="10.5" fill="#e6e6e6">1</text>
<text x="116.6" y="687.6" font-size="10.5" fill="#e0e0e0">0.2</text><path d="M132 683.2L135.2 686.6L138.4 683.2" fill="none" stroke="#d8d8d8" stroke-width="1.1"/>
<rect x="143" y="623.5" width="1" height="69.5" fill="#454545"/>
<rect x="144" y="623.5" width="54" height="69.5" fill="#535353"/>
<g transform="translate(149.8 631)"><rect width="42.5" height="43" fill="url(#chk4)"/>
<rect x="9.2" y="15.8" width="21" height="15.5" fill="#036535" transform="rotate(0 19.7 23.5)"/>
<g fill="#5a9a6a"><circle cx="11.7" cy="12.5" r="1"/><circle cx="28.7" cy="11.5" r="1"/><rect x="15.7" y="35.5" width="3" height="1.2"/><rect x="21.7" y="35.5" width="3" height="1.2"/></g><g fill="#e8b0a8"><rect x="18.2" y="32.5" width="1" height="3"/><rect x="20.7" y="32.5" width="1" height="3"/></g>
<g fill="#d8e8d8" opacity="0.8"><rect x="11.7" y="20.5" width="3" height="1"/><rect x="17.7" y="20.5" width="2" height="1"/><rect x="22.7" y="20.5" width="3" height="1"/><rect x="11.7" y="24.5" width="4" height="1"/><rect x="18.7" y="24.5" width="3" height="1"/><rect x="22.7" y="24.5" width="4" height="1"/></g>
</g>
<rect x="149.0" y="630.5" width="9" height="11" fill="#464646" stroke="#5a5a5a" stroke-width="0.6"/>
<text x="150.60000000000002" y="640.3" font-size="10.5" fill="#e6e6e6">2</text>
<text x="171.6" y="687.6" font-size="10.5" fill="#e0e0e0">0.2</text><path d="M187 683.2L190.2 686.6L193.4 683.2" fill="none" stroke="#d8d8d8" stroke-width="1.1"/>
<rect x="198" y="623.5" width="1" height="69.5" fill="#454545"/>
<rect x="199" y="623.5" width="54" height="69.5" fill="#535353"/>
<g transform="translate(204.8 631)"><rect width="42.5" height="43" fill="url(#chk4)"/>
<rect x="9.2" y="15.8" width="21" height="15.5" fill="#036535" transform="rotate(0 19.7 23.5)"/>
<g fill="#5a9a6a"><circle cx="11.7" cy="12.5" r="1"/><circle cx="28.7" cy="11.5" r="1"/><rect x="15.7" y="35.5" width="3" height="1.2"/><rect x="21.7" y="35.5" width="3" height="1.2"/></g><g fill="#e8b0a8"><rect x="18.2" y="32.5" width="1" height="3"/><rect x="20.7" y="32.5" width="1" height="3"/></g>
<g fill="#d8e8d8" opacity="0.8"><rect x="11.7" y="20.5" width="3" height="1"/><rect x="17.7" y="20.5" width="2" height="1"/><rect x="22.7" y="20.5" width="3" height="1"/><rect x="11.7" y="24.5" width="4" height="1"/><rect x="18.7" y="24.5" width="3" height="1"/><rect x="22.7" y="24.5" width="4" height="1"/></g>
</g>
<rect x="204.0" y="630.5" width="9" height="11" fill="#464646" stroke="#5a5a5a" stroke-width="0.6"/>
<text x="205.60000000000002" y="640.3" font-size="10.5" fill="#e6e6e6">3</text>
<text x="226.6" y="687.6" font-size="10.5" fill="#e0e0e0">0.2</text><path d="M242 683.2L245.2 686.6L248.4 683.2" fill="none" stroke="#d8d8d8" stroke-width="1.1"/>
<rect x="253" y="623.5" width="1" height="69.5" fill="#454545"/>
<rect x="254" y="623.5" width="54" height="69.5" fill="#535353"/>
<g transform="translate(259.8 631)"><rect width="42.5" height="43" fill="url(#chk4)"/>
<rect x="9.2" y="15.8" width="21" height="15.5" fill="#036535" transform="rotate(0 19.7 23.5)"/>
<g fill="#5a9a6a"><circle cx="11.7" cy="12.5" r="1"/><circle cx="28.7" cy="11.5" r="1"/><rect x="15.7" y="35.5" width="3" height="1.2"/><rect x="21.7" y="35.5" width="3" height="1.2"/></g><g fill="#e8b0a8"><rect x="18.2" y="32.5" width="1" height="3"/><rect x="20.7" y="32.5" width="1" height="3"/></g>
<g fill="#d8e8d8" opacity="0.8"><rect x="11.7" y="20.5" width="3" height="1"/><rect x="17.7" y="20.5" width="2" height="1"/><rect x="22.7" y="20.5" width="3" height="1"/><rect x="11.7" y="24.5" width="4" height="1"/><rect x="18.7" y="24.5" width="3" height="1"/><rect x="22.7" y="24.5" width="4" height="1"/></g>
</g>
<rect x="259.0" y="630.5" width="9" height="11" fill="#464646" stroke="#5a5a5a" stroke-width="0.6"/>
<text x="260.6" y="640.3" font-size="10.5" fill="#e6e6e6">4</text>
<text x="281.6" y="687.6" font-size="10.5" fill="#e0e0e0">0.2</text><path d="M297 683.2L300.2 686.6L303.4 683.2" fill="none" stroke="#d8d8d8" stroke-width="1.1"/>
<rect x="308" y="623.5" width="1" height="69.5" fill="#454545"/>
<rect x="309" y="623.5" width="54" height="69.5" fill="#535353"/>
<g transform="translate(314.8 631)"><rect width="42.5" height="43" fill="url(#chk4)"/>
<rect x="9.2" y="15.8" width="21" height="15.5" fill="#036535" transform="rotate(0 19.7 23.5)"/>
<g fill="#5a9a6a"><circle cx="11.7" cy="12.5" r="1"/><circle cx="28.7" cy="11.5" r="1"/><rect x="15.7" y="35.5" width="3" height="1.2"/><rect x="21.7" y="35.5" width="3" height="1.2"/></g><g fill="#e8b0a8"><rect x="18.2" y="32.5" width="1" height="3"/><rect x="20.7" y="32.5" width="1" height="3"/></g>
<g fill="#d8e8d8" opacity="0.8"><rect x="11.7" y="20.5" width="3" height="1"/><rect x="17.7" y="20.5" width="2" height="1"/><rect x="22.7" y="20.5" width="3" height="1"/><rect x="11.7" y="24.5" width="4" height="1"/><rect x="18.7" y="24.5" width="3" height="1"/><rect x="22.7" y="24.5" width="4" height="1"/></g>
</g>
<rect x="314.0" y="630.5" width="9" height="11" fill="#464646" stroke="#5a5a5a" stroke-width="0.6"/>
<text x="315.6" y="640.3" font-size="10.5" fill="#e6e6e6">5</text>
<text x="336.6" y="687.6" font-size="10.5" fill="#e0e0e0">0.2</text><path d="M352 683.2L355.2 686.6L358.4 683.2" fill="none" stroke="#d8d8d8" stroke-width="1.1"/>
<rect x="363" y="623.5" width="1" height="69.5" fill="#454545"/>
<rect x="364" y="623.5" width="54" height="69.5" fill="#535353"/>
<g transform="translate(369.8 631)"><rect width="42.5" height="43" fill="url(#chk4)"/>
<rect x="9.2" y="15.8" width="21" height="15.5" fill="#036535" transform="rotate(0 19.7 23.5)"/>
<g fill="#5a9a6a"><circle cx="11.7" cy="12.5" r="1"/><circle cx="28.7" cy="11.5" r="1"/><rect x="15.7" y="35.5" width="3" height="1.2"/><rect x="21.7" y="35.5" width="3" height="1.2"/></g><g fill="#e8b0a8"><rect x="18.2" y="32.5" width="1" height="3"/><rect x="20.7" y="32.5" width="1" height="3"/></g>
</g>
<rect x="369.0" y="630.5" width="9" height="11" fill="#464646" stroke="#5a5a5a" stroke-width="0.6"/>
<text x="370.6" y="640.3" font-size="10.5" fill="#e6e6e6">6</text>
<text x="391.6" y="687.6" font-size="10.5" fill="#e0e0e0">0.2</text><path d="M407 683.2L410.2 686.6L413.4 683.2" fill="none" stroke="#d8d8d8" stroke-width="1.1"/>
<rect x="418" y="623.5" width="1" height="69.5" fill="#454545"/>
<rect x="419" y="623.5" width="54" height="69.5" fill="#535353"/>
<g transform="translate(424.8 631)"><rect width="42.5" height="43" fill="url(#chk4)"/>
<rect x="9.4" y="14.2" width="21" height="15" fill="#036535" transform="rotate(-5 19.9 21.7)"/>
<g fill="#5a9a6a"><circle cx="11.899999999999999" cy="10.7" r="1"/><circle cx="28.9" cy="9.7" r="1"/><rect x="15.899999999999999" y="33.7" width="3" height="1.2"/><rect x="21.9" y="33.7" width="3" height="1.2"/></g><g fill="#e8b0a8"><rect x="18.4" y="30.7" width="1" height="3"/><rect x="20.9" y="30.7" width="1" height="3"/></g>
</g>
<rect x="424.0" y="630.5" width="9" height="11" fill="#464646" stroke="#5a5a5a" stroke-width="0.6"/>
<text x="425.6" y="640.3" font-size="10.5" fill="#e6e6e6">7</text>
<text x="446.6" y="687.6" font-size="10.5" fill="#e0e0e0">0.2</text><path d="M462 683.2L465.2 686.6L468.4 683.2" fill="none" stroke="#d8d8d8" stroke-width="1.1"/>
<rect x="473" y="623.5" width="1" height="69.5" fill="#454545"/>
<rect x="474" y="623.5" width="54" height="69.5" fill="#535353"/>
<g transform="translate(479.8 631)"><rect width="42.5" height="43" fill="url(#chk4)"/>
<rect x="9.3" y="12.5" width="21" height="15" fill="#036535" transform="rotate(-36 19.8 20)"/>
<g fill="#5a9a6a"><circle cx="11.8" cy="9" r="1"/><circle cx="28.8" cy="8" r="1"/><rect x="15.8" y="32" width="3" height="1.2"/><rect x="21.8" y="32" width="3" height="1.2"/></g><g fill="#e8b0a8"><rect x="18.3" y="29" width="1" height="3"/><rect x="20.8" y="29" width="1" height="3"/></g>
</g>
<rect x="479.0" y="630.5" width="9" height="11" fill="#464646" stroke="#5a5a5a" stroke-width="0.6"/>
<text x="480.6" y="640.3" font-size="10.5" fill="#e6e6e6">8</text>
<text x="501.6" y="687.6" font-size="10.5" fill="#e0e0e0">0.2</text><path d="M517 683.2L520.2 686.6L523.4 683.2" fill="none" stroke="#d8d8d8" stroke-width="1.1"/>
<rect x="528" y="623.5" width="1" height="69.5" fill="#454545"/>
<rect x="529" y="623.5" width="54" height="69.5" fill="#686868"/>
<g transform="translate(534.8 631)"><rect width="42.5" height="43" fill="url(#chk4)"/>
<rect x="9.0" y="12.0" width="21.7" height="14.6" fill="#036535" transform="rotate(-54 19.9 19.3)"/>
<g fill="#5a9a6a"><circle cx="11.899999999999999" cy="8.3" r="1"/><circle cx="28.9" cy="7.300000000000001" r="1"/><rect x="15.899999999999999" y="31.3" width="3" height="1.2"/><rect x="21.9" y="31.3" width="3" height="1.2"/></g><g fill="#e8b0a8"><rect x="18.4" y="28.3" width="1" height="3"/><rect x="20.9" y="28.3" width="1" height="3"/></g>
</g>
<rect x="532.3" y="628.5" width="47.5" height="48" fill="none" stroke="#e6e6e6" stroke-width="1.5"/>
<rect x="534.0" y="630.5" width="9" height="11" fill="#464646" stroke="#5a5a5a" stroke-width="0.6"/>
<text x="535.5999999999999" y="640.3" font-size="10.5" fill="#e6e6e6">9</text>
<text x="556.6" y="687.6" font-size="10.5" fill="#e0e0e0">0.2</text><path d="M572 683.2L575.2 686.6L578.4 683.2" fill="none" stroke="#d8d8d8" stroke-width="1.1"/>
<rect x="583" y="623.5" width="1" height="69.5" fill="#454545"/>
<rect x="584" y="623.5" width="54" height="69.5" fill="#535353"/>
<g transform="translate(589.8 631)"><rect width="42.5" height="43" fill="url(#chk4)"/>
<rect x="11.4" y="9.3" width="15" height="21" fill="#036535" transform="rotate(12 18.9 19.8)"/>
<g fill="#5a9a6a"><circle cx="10.899999999999999" cy="8.8" r="1"/><circle cx="27.9" cy="7.800000000000001" r="1"/><rect x="14.899999999999999" y="31.8" width="3" height="1.2"/><rect x="20.9" y="31.8" width="3" height="1.2"/></g><g fill="#e8b0a8"><rect x="17.4" y="28.8" width="1" height="3"/><rect x="19.9" y="28.8" width="1" height="3"/></g>
</g>
<rect x="589.0" y="630.5" width="15" height="11" fill="#464646" stroke="#5a5a5a" stroke-width="0.6"/>
<text x="590.5999999999999" y="640.3" font-size="10.5" fill="#e6e6e6">10</text>
<text x="611.6" y="687.6" font-size="10.5" fill="#e0e0e0">0.2</text><path d="M627 683.2L630.2 686.6L633.4 683.2" fill="none" stroke="#d8d8d8" stroke-width="1.1"/>
<rect x="638" y="623.5" width="1" height="69.5" fill="#454545"/>
<rect x="639" y="623.5" width="54" height="69.5" fill="#535353"/>
<g transform="translate(644.8 631)"><rect width="42.5" height="43" fill="url(#chk4)"/>
<rect x="11.8" y="9.0" width="15" height="21" fill="#036535" transform="rotate(0 19.3 19.5)"/>
<g fill="#5a9a6a"><circle cx="11.3" cy="8.5" r="1"/><circle cx="28.3" cy="7.5" r="1"/><rect x="15.3" y="31.5" width="3" height="1.2"/><rect x="21.3" y="31.5" width="3" height="1.2"/></g><g fill="#e8b0a8"><rect x="17.8" y="28.5" width="1" height="3"/><rect x="20.3" y="28.5" width="1" height="3"/></g>
<g fill="#d8e8d8" opacity="0.8"><rect x="14.3" y="12.5" width="5" height="1"/><rect x="20.3" y="12.5" width="3" height="1"/><rect x="14.3" y="15.5" width="4" height="1"/><rect x="14.3" y="18.5" width="3" height="1"/><rect x="14.3" y="21.5" width="4" height="1"/></g>
</g>
<rect x="644.0" y="630.5" width="15" height="11" fill="#464646" stroke="#5a5a5a" stroke-width="0.6"/>
<text x="645.5999999999999" y="640.3" font-size="10.5" fill="#e6e6e6">11</text>
<text x="666.6" y="687.6" font-size="10.5" fill="#e0e0e0">0.2</text><path d="M682 683.2L685.2 686.6L688.4 683.2" fill="none" stroke="#d8d8d8" stroke-width="1.1"/>
<rect x="693" y="623.5" width="1" height="69.5" fill="#454545"/>
<rect x="694" y="623.5" width="54" height="69.5" fill="#535353"/>
<g transform="translate(699.8 631)"><rect width="42.5" height="43" fill="url(#chk4)"/>
<rect x="11.8" y="9.0" width="15" height="21" fill="#036535" transform="rotate(0 19.3 19.5)"/>
<g fill="#5a9a6a"><circle cx="11.3" cy="8.5" r="1"/><circle cx="28.3" cy="7.5" r="1"/><rect x="15.3" y="31.5" width="3" height="1.2"/><rect x="21.3" y="31.5" width="3" height="1.2"/></g><g fill="#e8b0a8"><rect x="17.8" y="28.5" width="1" height="3"/><rect x="20.3" y="28.5" width="1" height="3"/></g>
<g fill="#d8e8d8" opacity="0.8"><rect x="14.3" y="12.5" width="5" height="1"/><rect x="20.3" y="12.5" width="3" height="1"/><rect x="14.3" y="15.5" width="4" height="1"/><rect x="14.3" y="18.5" width="3" height="1"/><rect x="14.3" y="21.5" width="4" height="1"/></g>
</g>
<rect x="699.0" y="630.5" width="15" height="11" fill="#464646" stroke="#5a5a5a" stroke-width="0.6"/>
<text x="700.5999999999999" y="640.3" font-size="10.5" fill="#e6e6e6">12</text>
<text x="721.6" y="687.6" font-size="10.5" fill="#e0e0e0">0.2</text><path d="M737 683.2L740.2 686.6L743.4 683.2" fill="none" stroke="#d8d8d8" stroke-width="1.1"/>
<rect x="748" y="623.5" width="1" height="69.5" fill="#454545"/>
<rect x="749" y="623.5" width="54" height="69.5" fill="#535353"/>
<g transform="translate(754.8 631)"><rect width="42.5" height="43" fill="url(#chk4)"/>
<rect x="11.8" y="9.0" width="15" height="21" fill="#036535" transform="rotate(0 19.3 19.5)"/>
<g fill="#5a9a6a"><circle cx="11.3" cy="8.5" r="1"/><circle cx="28.3" cy="7.5" r="1"/><rect x="15.3" y="31.5" width="3" height="1.2"/><rect x="21.3" y="31.5" width="3" height="1.2"/></g><g fill="#e8b0a8"><rect x="17.8" y="28.5" width="1" height="3"/><rect x="20.3" y="28.5" width="1" height="3"/></g>
<g fill="#d8e8d8" opacity="0.8"><rect x="14.3" y="12.5" width="5" height="1"/><rect x="20.3" y="12.5" width="3" height="1"/><rect x="14.3" y="15.5" width="4" height="1"/><rect x="14.3" y="18.5" width="3" height="1"/><rect x="14.3" y="21.5" width="4" height="1"/></g>
</g>
<rect x="754.0" y="630.5" width="15" height="11" fill="#464646" stroke="#5a5a5a" stroke-width="0.6"/>
<text x="755.5999999999999" y="640.3" font-size="10.5" fill="#e6e6e6">13</text>
<text x="776.6" y="687.6" font-size="10.5" fill="#e0e0e0">0.2</text><path d="M792 683.2L795.2 686.6L798.4 683.2" fill="none" stroke="#d8d8d8" stroke-width="1.1"/>
<rect x="803" y="623.5" width="1" height="69.5" fill="#454545"/>
<rect x="89" y="693" width="714" height="1" fill="#3b3b3b"/>
<rect x="89" y="694" width="305" height="26" fill="#535353"/>
<rect x="118" y="694" width="1" height="26" fill="#444"/>
<rect x="190" y="694" width="1" height="26" fill="#444"/>
<rect x="306.5" y="694" width="1" height="26" fill="#444"/>
<rect x="394" y="694" width="1" height="26" fill="#444"/>
<g fill="#d0d0d0"><rect x="103.2" y="701.5" width="1.2" height="12.5"/><rect x="101" y="701.5" width="5.5" height="1"/><rect x="98" y="704" width="4" height="1.6"/><rect x="98" y="707.2" width="4" height="1.6"/><rect x="98" y="710.4" width="4" height="1.6"/><rect x="105.6" y="704" width="5" height="1.6"/><rect x="105.6" y="707.2" width="4" height="1.6"/><rect x="105.6" y="710.4" width="6.5" height="1.6"/></g>
<text x="128" y="711" font-size="10.5" fill="#c8c8c8">Forever</text>
<path d="M178.5 705.5H186L182.2 710Z" fill="#d0d0d0"/>
<g fill="#d0d0d0"><rect x="200" y="702.5" width="1.4" height="8.5"/><path d="M210.2 702.5V711L202.5 706.8Z"/><path d="M237 702.5V711L229.3 706.8Z"/><rect x="238.6" y="702.5" width="1.4" height="8.5"/><path d="M260 701.5V712L269.3 706.8Z"/><rect x="287.7" y="702.5" width="1.4" height="8.5"/><path d="M290.7 702.5V711L298.4 706.8Z"/></g>
<path d="M318 702.5L326 710" stroke="#888" stroke-width="1.5" stroke-dasharray="2 1"/><circle cx="326.5" cy="710.5" r="2.2" fill="#9a9a9a"/>
<rect x="346.5" y="701.5" width="11" height="11" fill="none" stroke="#d0d0d0" stroke-width="1.2"/><path d="M352 704V710M349 707H355" stroke="#d0d0d0" stroke-width="1.2"/>
<path d="M374.5 703H384.5M377.5 703V701.5H381.5V703M375.8 703.5L376.6 714.5H382.4L383.2 703.5" fill="none" stroke="#d0d0d0" stroke-width="1.2"/><path d="M378.3 705.5V712.5M380.7 705.5V712.5" stroke="#d0d0d0" stroke-width="0.9"/>
<rect x="395" y="694" width="408" height="26" fill="#464646"/>
<rect x="398" y="706.5" width="261" height="10.5" rx="5.2" fill="#5c5c5c"/>
<rect x="783" y="694" width="20" height="26" fill="#4d4d4d"/>
</svg>
<!--/TL-->
<!-- separators -->
<div class="a" style="left:755px;top:57px;width:3px;height:641px;background:#2b2b2b"></div>

<div class="a" style="left:795px;top:57px;width:3px;height:641px;background:#2b2b2b"></div>
<div class="a" style="left:0;top:698.5px;width:1039px;height:1.5px;background:#111;z-index:5"></div><div class="a" style="left:1038px;top:0;width:1px;height:700px;background:#111;z-index:5"></div><!--RP-->
<svg class="a" style="left:755px;top:57px" width="284" height="642" viewBox="803 79 284 642" font-family="Liberation Sans">
<rect x="803" y="79" width="284" height="642" fill="#2b2b2b"/>
<rect x="805" y="80" width="281" height="10.5" fill="#424242"/>
<path d="M834 82.5L831.5 85L834 87.5M837.5 82.5L835 85L837.5 87.5" fill="none" stroke="#d8d8d8" stroke-width="1.1"/>
<path d="M1073 82.5L1075.5 85L1073 87.5M1076.5 82.5L1079 85L1076.5 87.5" fill="none" stroke="#d8d8d8" stroke-width="1.1"/>
<!-- thin column -->
<rect x="805.5" y="91" width="37.5" height="630" fill="#535353"/>
<rect x="805.5" y="131.2" width="37.5" height="1.5" fill="#3a3a3a"/>
<rect x="805.5" y="201" width="37.5" height="1.2" fill="#3a3a3a"/>
<g fill="#393939"><rect x="815.2" y="95.2" width="1" height="3.6"/><rect x="817.3" y="95.2" width="1" height="3.6"/><rect x="819.4" y="95.2" width="1" height="3.6"/><rect x="821.5" y="95.2" width="1" height="3.6"/><rect x="823.6" y="95.2" width="1" height="3.6"/><rect x="825.7" y="95.2" width="1" height="3.6"/><rect x="827.8" y="95.2" width="1" height="3.6"/><rect x="829.9" y="95.2" width="1" height="3.6"/><rect x="832.0" y="95.2" width="1" height="3.6"/></g>
<g fill="#393939"><rect x="815.2" y="136" width="1" height="3.6"/><rect x="817.3" y="136" width="1" height="3.6"/><rect x="819.4" y="136" width="1" height="3.6"/><rect x="821.5" y="136" width="1" height="3.6"/><rect x="823.6" y="136" width="1" height="3.6"/><rect x="825.7" y="136" width="1" height="3.6"/><rect x="827.8" y="136" width="1" height="3.6"/><rect x="829.9" y="136" width="1" height="3.6"/><rect x="832.0" y="136" width="1" height="3.6"/></g>
<g fill="none" stroke="#dcdcdc" stroke-width="1.1"><rect x="818.4" y="106.9" width="4.4" height="4.4"/><rect x="818.4" y="112.6" width="4.4" height="4.4"/></g>
<rect x="817.9" y="118" width="5.4" height="4.8" fill="#dcdcdc"/>
<path d="M828 108.5C831 108.5 833 111 832.5 114.5C832 118 829.5 120.5 826.5 121.5" fill="none" stroke="#dcdcdc" stroke-width="1.4"/><path d="M825.8 108.5L829.5 106V111Z" fill="#dcdcdc"/>
<path d="M818.3 160.8L823.9 149.2L829.5 160.8M820.2 157H827.6" fill="none" stroke="#d8d8d8" stroke-width="1.3"/><rect x="831" y="147.3" width="1.1" height="16.2" fill="#d8d8d8"/>
<path d="M825.5 176.5V191M828.8 176.5V191M825 176.5H830.5" fill="none" stroke="#d8d8d8" stroke-width="1.5"/><path d="M825.5 175.8A4.2 4.2 0 0 0 825.5 184.2Z" fill="#d8d8d8"/>
<!-- color panel -->
<rect x="846" y="91.5" width="239" height="197" fill="#535353"/>
<rect x="846" y="91.5" width="239" height="28" fill="#424242"/>
<rect x="846" y="91.5" width="46.5" height="28.5" fill="#535353"/>
<rect x="892.5" y="91.5" width="1" height="28" fill="#3c3c3c"/>
<rect x="958" y="91.5" width="1" height="28" fill="#3c3c3c"/>
<text x="854.5" y="109" font-size="11" font-weight="bold" fill="#ececec">Color</text>
<text x="900.5" y="109" font-size="11" font-weight="bold" fill="#b0b0b0" textLength="47.5">Swatches</text>
<g fill="#cfcfcf"><rect x="1070" y="101.5" width="10" height="1"/><rect x="1070" y="103.8" width="10" height="1"/><rect x="1070" y="106.1" width="10" height="1"/><rect x="1070" y="108.4" width="10" height="1"/></g>
<defs>
<linearGradient id="cw" x1="0" y1="0" x2="1" y2="0"><stop offset="0" stop-color="#fff"/><stop offset="1" stop-color="#ff7426"/></linearGradient>
<linearGradient id="cb" x1="0" y1="0" x2="0" y2="1"><stop offset="0" stop-color="#000" stop-opacity="0"/><stop offset="1" stop-color="#000"/></linearGradient>
<linearGradient id="hue" x1="0" y1="0" x2="0" y2="1"><stop offset="0" stop-color="#ff0a30"/><stop offset="0.05" stop-color="#ff0a30"/><stop offset="0.18" stop-color="#e82ae8"/><stop offset="0.34" stop-color="#1a3ae8"/><stop offset="0.5" stop-color="#10f0f0"/><stop offset="0.68" stop-color="#10ee50"/><stop offset="0.84" stop-color="#fff050"/><stop offset="1" stop-color="#ff1020"/></linearGradient>
</defs>
<rect x="891" y="127" width="142" height="144" fill="url(#cw)"/>
<rect x="891" y="127" width="142" height="144" fill="url(#cb)"/>
<circle cx="896.5" cy="135.5" r="4.6" fill="none" stroke="#111" stroke-width="1.3"/><circle cx="896.5" cy="135.5" r="5.6" fill="none" stroke="#fff" stroke-width="0.6" opacity="0.5"/>
<rect x="1050" y="127" width="19" height="144" fill="url(#hue)"/>
<path d="M1040.6 256.6Q1040.6 254.6 1042.4 255.4L1048.4 259.4L1042.4 263.4Q1040.6 264.2 1040.6 262.2Z" fill="#2a2a2a"/><path d="M1041.5 257Q1041.5 256 1042.4 256.5L1046.8 259.4L1042.4 262.3Q1041.5 262.8 1041.5 261.8Z" fill="#e6e6e6"/>
<rect x="865.7" y="140.3" width="18.6" height="19.1" fill="#222"/><rect x="866.7" y="141.3" width="16.6" height="17.1" fill="#fff"/><rect x="867.8" y="142.4" width="14.4" height="14.9" fill="#fccfca"/>
<rect x="854.1" y="129" width="21.7" height="21.9" fill="#7a7a7a"/><rect x="855.1" y="130" width="19.7" height="19.9" fill="#222"/><rect x="856.1" y="131" width="17.7" height="17.9" fill="#fff"/><rect x="857.2" y="132.1" width="15.5" height="15.7" fill="#efebe8"/>
<!-- libraries panel -->
<rect x="846" y="291.5" width="239" height="196" fill="#535353"/>
<rect x="846" y="291.5" width="239" height="28" fill="#424242"/>
<rect x="846" y="291.5" width="48" height="28" fill="#474747"/>
<rect x="894" y="291.5" width="63.5" height="28.5" fill="#535353"/>
<rect x="957.5" y="291.5" width="83" height="28" fill="#474747"/>
<rect x="1040.5" y="291.5" width="1" height="28" fill="#3c3c3c"/>
<text x="855.3" y="309" font-size="11" font-weight="bold" fill="#b4b4b4">Learn</text>
<text x="903.3" y="309" font-size="11" font-weight="bold" fill="#ececec">Libraries</text>
<text x="966" y="309" font-size="11" font-weight="bold" fill="#b4b4b4">Adjustments</text>
<g fill="#cfcfcf"><rect x="1070" y="301.5" width="10" height="1"/><rect x="1070" y="303.8" width="10" height="1"/><rect x="1070" y="306.1" width="10" height="1"/><rect x="1070" y="308.4" width="10" height="1"/></g>
<circle cx="858.5" cy="336" r="3.2" fill="none" stroke="#dcdcdc" stroke-width="1.2"/><path d="M860.8 338.3L863.2 340.7" stroke="#dcdcdc" stroke-width="1.4"/>
<text x="869" y="340.5" font-size="11" font-style="italic" fill="#7c7c7c">Search libraries and Adobe Stock</text>
<rect x="854" y="347" width="223" height="1" fill="#484848"/>
<rect x="854.5" y="356.5" width="222" height="17.5" rx="2" fill="#464646" stroke="#3e3e3e" stroke-width="1"/>
<text x="865" y="369" font-size="11" fill="#e4e4e4">Stock Templates</text>
<path d="M1064 363L1067.5 366.5L1071 363" fill="none" stroke="#e0e0e0" stroke-width="1.5"/>
<text x="854" y="395.5" font-size="11" fill="#e0e0e0">View by type</text>
<path d="M922 390L925.5 393.5L929 390" fill="none" stroke="#e0e0e0" stroke-width="1.5"/>
<rect x="1035" y="382.5" width="18.5" height="17" rx="2" fill="#3c3c3c"/>
<g fill="#e2e2e2"><rect x="1038.5" y="385.5" width="5" height="5"/><rect x="1044.5" y="385.5" width="5" height="5"/><rect x="1038.5" y="391.5" width="5" height="5"/><rect x="1044.5" y="391.5" width="5" height="5"/></g>
<g fill="#d8d8d8"><rect x="1060" y="385" width="2.5" height="2.3"/><rect x="1063.5" y="385.5" width="9" height="1.3"/><rect x="1060" y="390" width="2.5" height="2.3"/><rect x="1063.5" y="390.5" width="9" height="1.3"/><rect x="1060" y="395" width="2.5" height="2.3"/><rect x="1063.5" y="395.5" width="9" height="1.3"/></g>
<rect x="846" y="406" width="239" height="1" fill="#474747"/>
<path d="M854 419L857.3 422.3L860.6 419" fill="none" stroke="#cfcfcf" stroke-width="1.2"/>
<text x="867" y="425" font-size="11" fill="#cfcfcf">Colors</text>
<rect x="1071" y="406" width="14" height="55" fill="#505050"/>
<circle cx="1077" cy="415" r="4.5" fill="#6a6a6a"/>
<rect x="854.5" y="434" width="63" height="30" rx="3" fill="#d0121f" stroke="#444" stroke-width="0.6"/>
<rect x="922.7" y="434" width="62.5" height="30" rx="3" fill="#fecb78" stroke="#444" stroke-width="0.6"/>
<rect x="990.8" y="434" width="62.5" height="30" rx="3" fill="#e8b998" stroke="#444" stroke-width="0.6"/>
<rect x="846" y="461" width="239" height="26.5" fill="#535353"/>
<rect x="846" y="461" width="239" height="0.8" fill="#474747"/>
<path d="M856 474H868M862 468V480" stroke="#e0e0e0" stroke-width="1.7"/><path d="M868 478.5H871L869.5 480Z" fill="#e0e0e0"/>
<path d="M879 468.5H884.5L886 470H894.5V480H879Z" fill="#d4d4d4"/>
<path d="M912 466.5L917 471H914V476H910V471H907Z" fill="#dcdcdc"/><rect x="906" y="477.5" width="12" height="1.3" fill="#dcdcdc"/><rect x="906" y="480" width="12" height="1.3" fill="#dcdcdc"/>
<text x="998" y="478.5" font-size="10.5" fill="#e4e4e4">7 MB</text>
<path d="M1034 481H1052C1054.5 481 1055 477 1052.5 476C1052.5 472.5 1049 470.5 1046 472C1044 467.5 1037.5 468 1037 473C1033.5 473 1032.5 481 1034 481Z" fill="#e0e0e0"/>
<g fill="none" stroke="#888" stroke-width="1.1"><path d="M1063 470.5H1075M1066.5 470.5V468.8H1071.5V470.5M1064.5 471L1065.3 481H1072.7L1073.5 471M1067.5 473V479M1070.5 473V479"/></g>
<!-- layers panel -->
<rect x="846" y="489" width="239" height="232" fill="#535353"/>
<rect x="846" y="489" width="239" height="27" fill="#424242"/>
<rect x="846" y="489" width="52" height="27.5" fill="#535353"/>
<rect x="898" y="489" width="65.5" height="27" fill="#474747"/>
<rect x="963.5" y="489" width="46.5" height="27" fill="#474747"/>
<rect x="963" y="489" width="1" height="27" fill="#3c3c3c"/><rect x="1010" y="489" width="1" height="27" fill="#3c3c3c"/>
<text x="855.4" y="506" font-size="11" font-weight="bold" fill="#ececec" textLength="32.5" lengthAdjust="spacingAndGlyphs">Layers</text>
<text x="907" y="506" font-size="11" font-weight="bold" fill="#b4b4b4" textLength="47" lengthAdjust="spacingAndGlyphs">Channels</text>
<text x="973" y="506" font-size="11" font-weight="bold" fill="#b4b4b4" textLength="27" lengthAdjust="spacingAndGlyphs">Paths</text>
<g fill="#cfcfcf"><rect x="1070" y="498" width="10" height="1"/><rect x="1070" y="500.3" width="10" height="1"/><rect x="1070" y="502.6" width="10" height="1"/><rect x="1070" y="504.9" width="10" height="1"/></g>
<rect x="850.5" y="527" width="86.5" height="16.5" rx="2" fill="#464646" stroke="#3e3e3e" stroke-width="1"/>
<circle cx="862" cy="534" r="3.6" fill="none" stroke="#e4e4e4" stroke-width="1.6"/><path d="M864.6 536.6L867.6 539.6" stroke="#e4e4e4" stroke-width="2"/>
<text x="871" y="539.5" font-size="11" fill="#e4e4e4">Kind</text>
<path d="M926.5 533.5L929.5 536.5L932.5 533.5" fill="none" stroke="#d8d8d8" stroke-width="1.2"/>
<rect x="948.5" y="530" width="11" height="9" fill="none" stroke="#dcdcdc" stroke-width="1.2"/><path d="M950 537.5L953 533.5L955 536L956.5 534.5L958.5 537.5Z" fill="#dcdcdc"/>
<circle cx="979.3" cy="535" r="4.8" fill="none" stroke="#dcdcdc" stroke-width="1.2"/><path d="M979.3 530.2A4.8 4.8 0 0 1 979.3 539.8Z" fill="#dcdcdc" transform="rotate(45 979.3 535)"/>
<path d="M998.5 529.8H1008.5M998.9 529.5V532M1008.1 529.5V532M1003.5 529.8V540.5M1000.8 540.2H1006.2" fill="none" stroke="#dcdcdc" stroke-width="1.8"/>
<rect x="1022" y="531" width="9" height="9" fill="none" stroke="#dcdcdc" stroke-width="1.2"/><g fill="#535353" stroke="#dcdcdc" stroke-width="0.9"><circle cx="1022" cy="531" r="1.3"/><circle cx="1031" cy="531" r="1.3"/><circle cx="1022" cy="540" r="1.3"/><circle cx="1031" cy="540" r="1.3"/></g>
<path d="M1049.5 532L1052 529.5H1056V539H1049.5Z" fill="none" stroke="#dcdcdc" stroke-width="1.2"/><rect x="1047" y="535" width="5.5" height="6" fill="#dcdcdc"/>
<rect x="1069.5" y="526" width="9" height="21" rx="4.5" fill="#4a4a4a" stroke="#7a7a7a" stroke-width="1"/><circle cx="1074" cy="530.5" r="4.5" fill="#e8e8e8"/>
<rect x="846" y="548.5" width="239" height="1" fill="#474747"/>
<rect x="850.5" y="555" width="129" height="16" rx="2" fill="#4e4e4e" stroke="#484848" stroke-width="1"/>
<text x="857" y="567" font-size="11" fill="#767676">Normal</text>
<path d="M968.5 561.5L971.5 564.5L974.5 561.5" fill="none" stroke="#6f6f6f" stroke-width="1"/>
<text x="984.5" y="566.5" font-size="11" fill="#787878">Opacity:</text>
<rect x="1026.5" y="555" width="51" height="16" rx="2" fill="#4e4e4e" stroke="#484848" stroke-width="1"/><rect x="1062" y="555" width="1" height="16" fill="#484848"/>
<text x="1029" y="567" font-size="10.5" fill="#6a6a6a">100%</text>
<path d="M1067 561.5L1070 564.5L1073 561.5" fill="none" stroke="#6f6f6f" stroke-width="1"/>
<rect x="846" y="577" width="239" height="1" fill="#474747"/>
<text x="850.5" y="594.5" font-size="11" fill="#dcdcdc">Unify:</text>
<g fill="#dcdcdc"><path d="M886.5 584.8L891.8 590.1L890.6 591.3L889.6 590.6L887.3 592.9L887.5 594.6L886.6 595.5L881.2 590.1L882.1 589.2L883.8 589.4L886.1 587.1L885.4 586.1Z"/><path d="M880.6 596.2L883.6 592.2L884.6 593.2Z"/></g>
<g fill="none" stroke="#dcdcdc" stroke-width="1.1"><rect x="888" y="594.5" width="5.5" height="4" rx="2"/><rect x="891.5" y="594.5" width="5.5" height="4" rx="2"/></g>
<path d="M903 589.5C905 586 914 586 916.2 589.5C914 593 905 593 903 589.5Z" fill="#dcdcdc"/><circle cx="909.6" cy="589.5" r="2.3" fill="#535353"/><circle cx="909.6" cy="589.5" r="1.1" fill="#dcdcdc"/>
<g fill="none" stroke="#dcdcdc" stroke-width="1.1"><rect x="910" y="594.5" width="5.5" height="4" rx="2"/><rect x="913.5" y="594.5" width="5.5" height="4" rx="2"/></g>
<text x="925" y="595" font-size="13" font-style="italic" fill="#dcdcdc" font-family="Liberation Serif">fx</text>
<g fill="none" stroke="#dcdcdc" stroke-width="1.1"><rect x="933" y="594.5" width="5.5" height="4" rx="2"/><rect x="936.5" y="594.5" width="5.5" height="4" rx="2"/></g>
<rect x="972" y="585.8" width="9.7" height="9.9" rx="1.5" fill="#e8e8e8"/><path d="M974.2 590.6L976.4 593L979.8 588" fill="none" stroke="#2e2e2e" stroke-width="1.6"/>
<text x="986.3" y="594.5" font-size="11" fill="#e0e0e0" textLength="89" lengthAdjust="spacingAndGlyphs">Propagate Frame 1</text>
<rect x="846" y="604" width="239" height="1" fill="#474747"/>
<text x="851" y="622" font-size="11" fill="#dcdcdc">Lock:</text>
<rect x="883.8" y="613.5" width="10" height="10.5" fill="none" stroke="#dcdcdc" stroke-width="1"/><g fill="#dcdcdc"><rect x="883.8" y="613.5" width="2.5" height="2.6"/><rect x="888.8" y="613.5" width="2.5" height="2.6"/><rect x="886.3" y="616.1" width="2.5" height="2.6"/><rect x="891.3" y="616.1" width="2.5" height="2.6"/><rect x="883.8" y="618.7" width="2.5" height="2.6"/><rect x="888.8" y="618.7" width="2.5" height="2.6"/><rect x="886.3" y="621.3" width="2.5" height="2.6"/><rect x="891.3" y="621.3" width="2.5" height="2.6"/></g>
<path d="M909.5 618.6L916.8 613" stroke="#dcdcdc" stroke-width="2.2" stroke-linecap="round"/><path d="M904.2 625.6C904.6 622 906 619.6 908.4 619.6C910.2 619.6 910.8 621.4 909.9 622.8C908.6 624.8 906.6 625.3 904.2 625.6Z" fill="#dcdcdc"/>
<g fill="none" stroke="#dcdcdc" stroke-width="1.3"><path d="M932.4 613V625.5M926 619.3H938.8"/></g><g fill="#dcdcdc"><path d="M932.4 611.8L929.9 614.6H934.9Z M932.4 626.7L929.9 623.9H934.9Z M925.2 619.3L928 616.8V621.8Z M939.6 619.3L936.8 616.8V621.8Z"/></g>
<g fill="none" stroke="#dcdcdc" stroke-width="1.2"><path d="M948.2 616.5H958L961 619.5V623.5H951.2V612.5"/><path d="M951.2 623.5V626M958 616.5V613.5M948.2 623.5H951.2M961 623.5H962.5" stroke-width="1"/></g>
<rect x="971.7" y="618.5" width="10.4" height="7" rx="1" fill="#dcdcdc"/><path d="M973.8 618.5V616.6A3.1 3.1 0 0 1 980 616.6V618.5" fill="none" stroke="#dcdcdc" stroke-width="1.6"/><rect x="976.2" y="620.8" width="1.5" height="2.6" fill="#535353"/>
<text x="1007" y="622" font-size="11" fill="#727272">Fill:</text>
<rect x="1026.5" y="610.5" width="51" height="16" rx="2" fill="#4e4e4e" stroke="#484848" stroke-width="1"/><rect x="1062" y="610.5" width="1" height="16" fill="#484848"/>
<text x="1029" y="623" font-size="10.5" fill="#6a6a6a">100%</text>
<path d="M1067 617L1070 620L1073 617" fill="none" stroke="#6f6f6f" stroke-width="1"/>
<rect x="846" y="632" width="239" height="1" fill="#474747"/>
<!-- layer rows -->
<rect x="846" y="633" width="225" height="40" fill="#535353"/>
<rect x="876.5" y="633" width="194.5" height="40" fill="#6a6a6a"/>
<rect x="876" y="633" width="1" height="62" fill="#474747"/>
<rect x="855" y="647.5" width="11" height="11" fill="none" stroke="#4a4a4a" stroke-width="1"/>
<rect x="879.8" y="637.8" width="32.4" height="32.2" fill="#2e2e2e"/><rect x="880.8" y="638.8" width="30.4" height="30.2" fill="url(#chkL)"/>
<defs><pattern id="chkL" x="880.8" y="638.8" width="8" height="8" patternUnits="userSpaceOnUse"><rect width="8" height="8" fill="#fff"/><rect x="4" width="4" height="4" fill="#cdcdcd"/><rect y="4" width="4" height="4" fill="#cdcdcd"/></pattern></defs>
<rect x="888.3" y="647.2" width="15.4" height="9.5" fill="#036535" transform="rotate(38 896 652)"/>
<g fill="#5a9a6a"><circle cx="889" cy="644" r="0.7"/><circle cx="902" cy="644.5" r="0.7"/><rect x="893" y="662.5" width="4" height="0.9"/></g><rect x="894" y="660" width="1" height="2.5" fill="#e8b0a8"/>
<path d="M878.5 642V636.5H884M907 636.5H913V642M878.5 664V670H884M907 670H913V664" fill="none" stroke="#f0f0f0" stroke-width="1.6"/>
<text x="920.6" y="656.9" font-size="10.5" fill="#eeeeee" textLength="39.4" lengthAdjust="spacingAndGlyphs">Layer 16</text>
<rect x="846" y="673" width="225" height="1" fill="#474747"/>
<rect x="855" y="688" width="11" height="11" fill="none" stroke="#4a4a4a" stroke-width="1"/>
<rect x="879.8" y="678.8" width="32.4" height="20" fill="#2e2e2e"/><rect x="880.8" y="679.8" width="30.4" height="20" fill="url(#chkL)"/>
<text x="920.6" y="698" font-size="10.5" fill="#e8e8e8" textLength="42" lengthAdjust="spacingAndGlyphs">Frame 12</text>
<rect x="1071" y="633" width="14" height="62" fill="#4d4d4d"/>
<rect x="1073" y="636" width="9.5" height="19" rx="4.7" fill="#6f6f6f"/>
<rect x="846" y="695" width="239" height="26" fill="#535353"/>
<rect x="846" y="695" width="239" height="1" fill="#474747"/>
<g fill="none" stroke="#7e7e7e" stroke-width="1.4"><rect x="882" y="704" width="7" height="5" rx="2.5"/><rect x="887" y="704" width="7" height="5" rx="2.5"/></g>
<text x="910" y="712.5" font-size="13" font-style="italic" fill="#dcdcdc">fx</text><path d="M921.5 714H924.5L923 715.5Z" fill="#dcdcdc"/>
<rect x="936.5" y="701.5" width="13" height="11" fill="#dcdcdc"/><circle cx="943" cy="707" r="3.2" fill="#535353"/>
<circle cx="970" cy="707" r="5" fill="none" stroke="#dcdcdc" stroke-width="1.3"/><path d="M966.5 703.5L973.5 710.5A5 5 0 0 1 966.5 703.5Z" fill="#dcdcdc"/><path d="M974 714H977L975.5 715.5Z" fill="#dcdcdc"/>
<path d="M991.5 702.5H996L997.5 704H1003V712.5H991.5Z" fill="#dcdcdc"/>
<rect x="1019.5" y="701.5" width="11" height="11" fill="none" stroke="#dcdcdc" stroke-width="1.2"/><path d="M1025 704V710M1022 707H1028" stroke="#dcdcdc" stroke-width="1.2"/>
<path d="M1045.5 703.5H1056.5M1049 703.5V701.8H1053V703.5M1047 704L1047.8 714.5H1055.2L1056 704M1050 706V712.5M1053 706V712.5" fill="none" stroke="#dcdcdc" stroke-width="1.2"/>
</svg>
<!--/RP-->
</div>
</body></html>
